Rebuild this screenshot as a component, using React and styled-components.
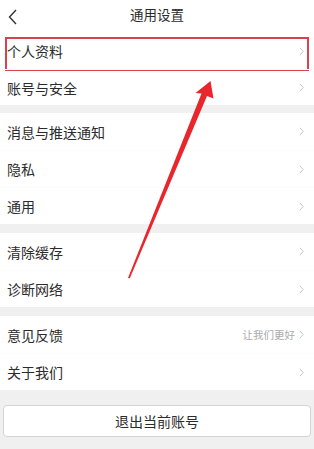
import { createGlobalStyle, styled } from "styled-components";

const GlobalStyle = createGlobalStyle`
  html, body {
    margin: 0;
    padding: 0;
    background: #f0f0f0;
  }
  body {
    font-family: "Noto Sans CJK SC", "Noto Sans", sans-serif;
    color: #2b2b2b;
  }
`;

const Page = styled.div`
  position: relative;
  width: 314px;
  height: 449px;
  overflow: hidden;
  background: #f0f0f0;
`;

const Header = styled.div`
  height: 33px;
  display: flex;
  align-items: flex-start;
  justify-content: center;
  padding-top: 4px;
  box-sizing: border-box;
  background: #fff;
  position: relative;
`;

const BackButton = styled.div`
  position: absolute;
  left: 8px;
  top: 6px;
  width: 10px;
  height: 16px;
`;

const Title = styled.div`
  font-size: 13.5px;
  line-height: 20px;
  color: #2b2b2b;
`;

const Group = styled.div`
  background: #fff;
  margin-bottom: ${(p) => p.$gap}px;
`;

const Row = styled.div`
  position: relative;
  height: ${(p) => p.$h}px;
  display: flex;
  align-items: center;
  padding: 0 10px 0 7px;
  box-sizing: border-box;

  & + & {
    border-top: 1px solid #fbfbfb;
  }

  ${(p) =>
    p.$highlight &&
    `
    &::after {
      content: "";
      position: absolute;
      left: 5px;
      right: 5px;
      top: 4px;
      bottom: -2px;
      border: 2px solid #d6434f;
      pointer-events: none;
    }
  `}
`;

const Label = styled.div`
  flex: 1;
  font-size: 14px;
  color: #2b2b2b;
`;

const Hint = styled.div`
  font-size: 10.5px;
  color: #aaa;
  margin-right: 4px;
`;

const Footer = styled.div`
  padding: 15px 3px 0;
`;

const LogoutButton = styled.div`
  height: 30px;
  background: #fff;
  border: 1px solid #d4d4d4;
  border-radius: 4px;
  display: flex;
  align-items: center;
  justify-content: center;
  font-size: 14px;
  color: #2b2b2b;
`;

const Arrow = styled.svg`
  position: absolute;
  left: 0;
  top: 0;
  pointer-events: none;
`;

function Chevron() {
  return (
    <svg width="5" height="9" viewBox="0 0 5 9">
      <path d="M0.8 0.8 L4.2 4.5 L0.8 8.2" fill="none" stroke="#c4c4c4" strokeWidth="1" />
    </svg>
  );
}

const groups = [
  { gap: 8, h: 36, items: [{ label: "个人资料", highlight: true }, { label: "账号与安全" }] },
  { gap: 9, h: 37, items: [{ label: "消息与推送通知" }, { label: "隐私" }, { label: "通用" }] },
  { gap: 9, h: 37, items: [{ label: "清除缓存" }, { label: "诊断网络" }] },
  { gap: 0, h: 37, items: [{ label: "意见反馈", hint: "让我们更好" }, { label: "关于我们" }] },
];

export default function App() {
  return (
    <Page>
      <GlobalStyle />
      <Header>
        <BackButton>
          <svg width="10" height="16" viewBox="0 0 10 16">
            <path d="M8 1 L1.5 8 L8 15" fill="none" stroke="#333" strokeWidth="1.4" />
          </svg>
        </BackButton>
        <Title>通用设置</Title>
      </Header>
      {groups.map((g, gi) => (
        <Group key={gi} $gap={g.gap}>
          {g.items.map((item) => (
            <Row key={item.label} $h={g.h} $highlight={item.highlight}>
              <Label>{item.label}</Label>
              {item.hint && <Hint>{item.hint}</Hint>}
              <Chevron />
            </Row>
          ))}
        </Group>
      ))}
      <Footer>
        <LogoutButton>退出当前账号</LogoutButton>
      </Footer>
      <Arrow width="314" height="449" viewBox="0 0 314 449">
        <path d="M128 278 L129.8 278.3 L207 96 L213.5 98.5 L210.5 81 L195.5 93 L201.5 93.5 Z" fill="#e8262c" />
      </Arrow>
    </Page>
  );
}
